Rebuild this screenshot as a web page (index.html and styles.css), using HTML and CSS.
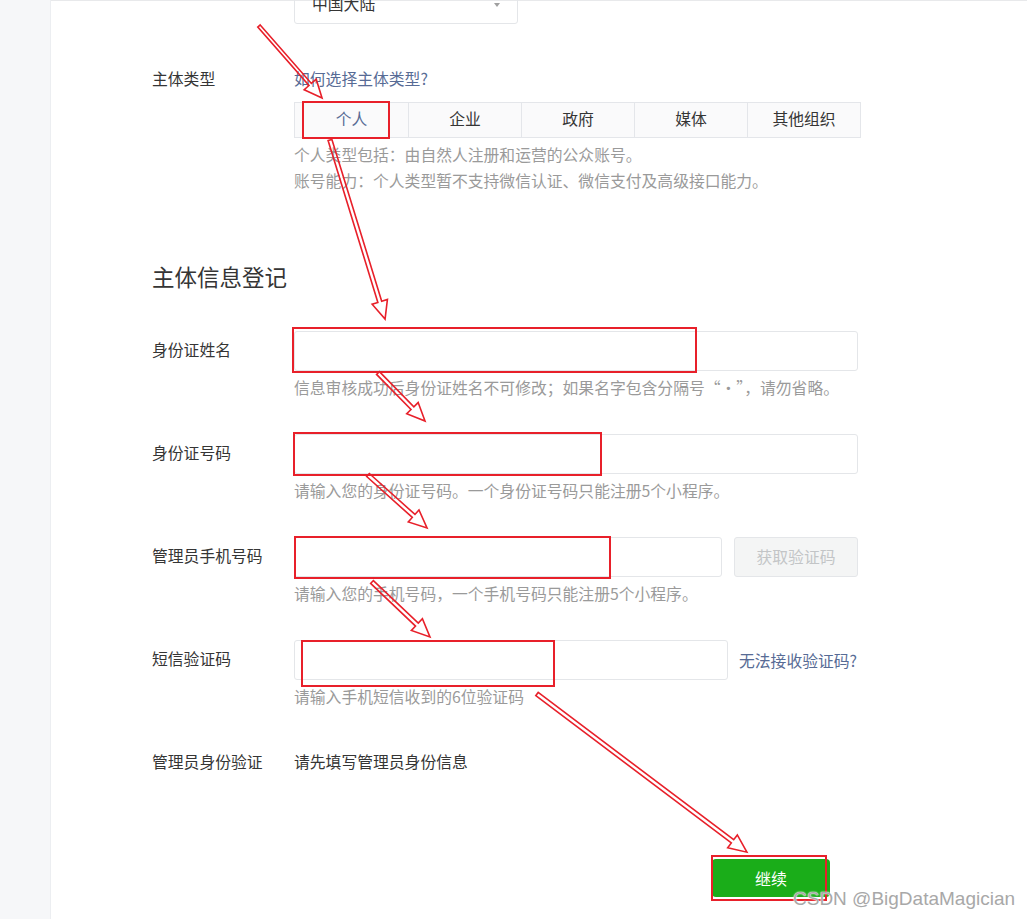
FILE: index.html
```html
<!DOCTYPE html>
<html lang="zh">

<head>
  <meta charset="UTF-8">
  <link rel="stylesheet" href="styles.css">
</head>

<body>
  <div class="page">
    <aside class="sidebar"></aside>
    <main class="main">
      <!-- 国家/地区 -->
      <div class="field field-region">
        <div class="label"></div>
        <div class="control">
          <div class="select">中国大陆<span class="caret"></span></div>
        </div>
      </div>

      <!-- 主体类型 -->
      <div class="field field-type">
        <div class="label">主体类型</div>
        <div class="control">
          <a class="link" href="javascript:;">如何选择主体类型?</a>
          <ul class="tabs">
            <li class="tab active">个人</li>
            <li class="tab">企业</li>
            <li class="tab">政府</li>
            <li class="tab">媒体</li>
            <li class="tab">其他组织</li>
          </ul>
          <p class="desc">个人类型包括：由自然人注册和运营的公众账号。</p>
          <p class="desc">账号能力：个人类型暂不支持微信认证、微信支付及高级接口能力。</p>
        </div>
      </div>

      <h2 class="section-title">主体信息登记</h2>

      <div class="field">
        <div class="label label-input">身份证姓名</div>
        <div class="control">
          <input class="input" type="text">
          <p class="help">信息审核成功后身份证姓名不可修改；如果名字包含分隔号“·”，请勿省略。</p>
        </div>
      </div>

      <div class="field">
        <div class="label label-input">身份证号码</div>
        <div class="control">
          <input class="input" type="text">
          <p class="help">请输入您的身份证号码。一个身份证号码只能注册5个小程序。</p>
        </div>
      </div>

      <div class="field">
        <div class="label label-input">管理员手机号码</div>
        <div class="control">
          <div class="input-group">
            <input class="input input-phone" type="text">
            <button class="btn-code" disabled>获取验证码</button>
          </div>
          <p class="help">请输入您的手机号码，一个手机号码只能注册5个小程序。</p>
        </div>
      </div>

      <div class="field">
        <div class="label label-input">短信验证码</div>
        <div class="control">
          <div class="input-group input-group-sms">
            <input class="input input-sms" type="text">
            <a class="link link-inline" href="javascript:;">无法接收验证码?</a>
          </div>
          <p class="help">请输入手机短信收到的6位验证码</p>
        </div>
      </div>

      <div class="field field-admin">
        <div class="label label-input">管理员身份验证</div>
        <div class="control">
          <span class="value">请先填写管理员身份信息</span>
        </div>
      </div>

      <div class="actions">
        <button class="btn-primary">继续</button>
      </div>
    </main>
  </div>

  <!-- 标注 -->
  <svg class="marks" width="1027" height="919" viewBox="0 0 1027 919">
    <g class="mark-box">
      <rect x="303" y="102" width="86" height="36" />
      <rect x="293" y="328" width="403" height="44" />
      <rect x="294" y="433" width="307" height="42" />
      <rect x="295" y="537" width="315" height="41" />
      <rect x="302" y="641" width="252" height="45" />
      <rect x="712" y="856" width="114" height="44" />
    </g>
    <g class="mark-arrow">
      <polygon transform="translate(259,26) rotate(48.8)" points="0,-1.6 77.7,-1.6 77.7,-8 95.7,0 77.7,8 77.7,1.6 0,1.6" />
      <polygon transform="translate(330,140) rotate(72.9)" points="0,-2 169.3,-2 169.3,-8 187.3,0 169.3,8 169.3,2 0,2" />
      <polygon transform="translate(378,373) rotate(45.6)" points="0,-2 49.2,-2 49.2,-8 67.2,0 49.2,8 49.2,2 0,2" />
      <polygon transform="translate(368,475) rotate(41.9)" points="0,-2 61.3,-2 61.3,-8 79.3,0 61.3,8 61.3,2 0,2" />
      <polygon transform="translate(372,582) rotate(43.5)" points="0,-2 61.9,-2 61.9,-8 79.9,0 61.9,8 61.9,2 0,2" />
      <polygon transform="translate(537,694) rotate(37)" points="0,-2 244.8,-2 244.8,-8 262.8,0 244.8,8 244.8,2 0,2" />
    </g>
  </svg>

  <div class="watermark">CSDN @BigDataMagician</div>
</body>

</html>
```

FILE: styles.css
```css
* {
  box-sizing: border-box;
}

html,
body {
  margin: 0;
  height: 919px;
  overflow: hidden;
  background: #fff;
}

body {
  position: relative;
  font-family: "Noto Sans CJK SC", "Microsoft YaHei", sans-serif;
  font-size: 15.8px;
  color: #353535;
}

.page {
  display: flex;
  height: 100%;
}

.sidebar {
  width: 51px;
  flex-shrink: 0;
  background-color: #f6f7f9;
  border-right: 1px solid #eceef1;
}

.main {
  flex: 1;
  padding-left: 101px;
  border-top: 1px solid #e8e9eb;
}

.field {
  display: grid;
  grid-template-columns: 142px 564px;
  margin-bottom: 35px;
}

.label {
  line-height: 22px;
}

.label-input {
  line-height: 38px;
}

.control p {
  margin: 0;
}

/* 国家/地区 */
.field-region {
  margin-top: -17px;
  margin-bottom: 44px;
}

.select {
  position: relative;
  width: 224px;
  height: 40px;
  line-height: 37px;
  padding-left: 17px;
  border: 1px solid #e4e6e9;
  border-radius: 3px;
  color: #353535;
}

.caret {
  position: absolute;
  right: 17px;
  top: 18px;
  width: 0;
  height: 0;
  border-left: 3px solid transparent;
  border-right: 3px solid transparent;
  border-top: 4px solid #a0a0a0;
}

/* 主体类型 */
.field-type {
  grid-template-columns: 142px 567px;
  margin-bottom: 0;
}

.field-type .label,
.field-type .control {
  line-height: 22px;
}

.link {
  color: #576b95;
  text-decoration: none;
}

.tabs {
  list-style: none;
  margin: 12px 0 4px;
  padding: 0;
  display: grid;
  grid-template-columns: repeat(5, 1fr);
  height: 36px;
  border: 1px solid #e4e6ea;
  background-color: #fafafb;
}

.tab {
  text-align: center;
  line-height: 32px;
  font-size: 15.8px;
  color: #353535;
  border-left: 1px solid #e4e6ea;
}

.tab:first-child {
  border-left: none;
}

.tab.active {
  color: #576b95;
}

.field-type .desc {
  line-height: 26px;
  color: #9a9a9a;
}

.section-title {
  margin: 67px 0 40px;
  font-size: 22.5px;
  line-height: 30px;
  font-weight: normal;
  color: #353535;
}

/* 输入框 */
.input {
  display: block;
  width: 564px;
  height: 40px;
  margin: 0;
  padding: 0 12px;
  border: 1px solid #e4e6e9;
  border-radius: 3px;
  font: inherit;
  outline: none;
}

.help {
  margin-top: 6px !important;
  line-height: 22px;
  color: #9a9a9a;
}

.input-group {
  display: flex;
  align-items: center;
  gap: 12px;
}

.input-phone {
  width: 428px;
}

.btn-code {
  width: 124px;
  height: 40px;
  border: 1px solid #e4e6e9;
  border-radius: 3px;
  background-color: #f4f5f5;
  color: #c3c5c7;
  font: inherit;
  line-height: 36px;
}

.input-group-sms {
  gap: 11px;
}

.input-sms {
  width: 434px;
}

.link-inline {
  white-space: nowrap;
}

.field-admin {
  margin-bottom: 0;
}

.value {
  line-height: 38px;
}

/* 继续 */
.actions {
  margin-top: 78px;
  padding-left: 560px;
}

.btn-primary {
  width: 118px;
  height: 38px;
  border: none;
  border-radius: 4px;
  background-color: #1aad19;
  color: #fff;
  font: inherit;
  font-size: 16px;
}

/* 标注层 */
.marks {
  position: absolute;
  left: 0;
  top: 0;
  pointer-events: none;
}

.mark-box rect {
  fill: none;
  stroke: #e8202a;
  stroke-width: 2;
}

.mark-arrow polygon {
  fill: none;
  stroke: #e8202a;
  stroke-width: 1.6;
  stroke-linejoin: miter;
}

.watermark {
  position: absolute;
  left: 793px;
  top: 887px;
  font-family: "Liberation Sans", Arial, sans-serif;
  font-size: 19px;
  line-height: 24px;
  color: #a8a8a8;
  text-shadow: 0 0 1px #fff, 0 0 2px #fff;
  white-space: nowrap;
}
```
